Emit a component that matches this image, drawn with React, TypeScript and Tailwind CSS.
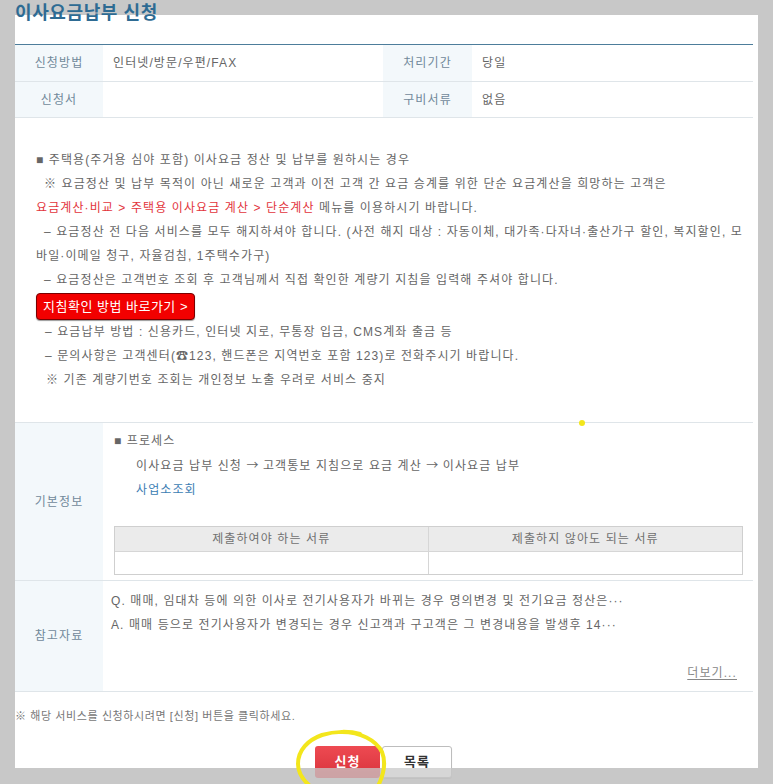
import React from 'react';

const labelCls =
  'flex shrink-0 items-center justify-center bg-[#f3f8fb] text-[#71899a]';

function InfoRow({
  a,
  b,
  c,
  d,
  h,
}: {
  a: string;
  b: string;
  c: string;
  d: string;
  h: string;
}) {
  return (
    <div className={`flex border-b border-[#dfe5e9] ${h}`}>
      <div className={`${labelCls} w-[88px]`}>{a}</div>
      <div className="flex w-[280px] items-center pl-[10px]">{b}</div>
      <div className={`${labelCls} w-[89px]`}>{c}</div>
      <div className="flex flex-1 items-center pl-[10px]">{d}</div>
    </div>
  );
}

const Arrow = () => <span className="font-['Noto_Sans_CJK_KR',sans-serif] tracking-normal">→</span>;

export default function App() {
  return (
    <div className="relative h-[784px] w-[773px] overflow-hidden bg-[#c8c8c8] font-['Liberation_Sans','Noto_Sans_CJK_KR',sans-serif] text-[12px] tracking-[1.1px] text-[#666]">
      <div className="ml-[15px] mt-[15px] flow-root h-[753px] w-[743px] bg-white">
        {/* Title */}
        <h1 className="-mt-[14px] h-[43px] text-[18px] font-bold leading-[24px] tracking-[0.6px] text-[#2e6b93]">
          이사요금납부 신청
        </h1>

        {/* Summary table */}
        <div className="w-[738px] border-t border-[#4d7d9b]">
          <InfoRow a="신청방법" b="인터넷/방문/우편/FAX" c="처리기간" d="당일" h="h-[37px]" />
          <InfoRow a="신청서" b="" c="구비서류" d="없음" h="h-[36px]" />
        </div>

        {/* Notice */}
        <div className="w-[738px] border-b border-[#dfe5e9] pb-[30px] pl-[21px] pt-[30px] leading-[24px]">
          <p className="whitespace-nowrap">■ 주택용(주거용 심야 포함) 이사요금 정산 및 납부를 원하시는 경우</p>
          <p className="whitespace-nowrap pl-[8px]">
            ※ 요금정산 및 납부 목적이 아닌 새로운 고객과 이전 고객 간 요금 승계를 위한 단순 요금계산을 희망하는 고객은
          </p>
          <p className="whitespace-nowrap">
            <span className="text-[#e2343c]">요금계산·비교 &gt; 주택용 이사요금 계산 &gt; 단순계산</span> 메뉴를 이용하시기 바랍니다.
          </p>
          <p className="whitespace-nowrap pl-[8px]">
            – 요금정산 전 다음 서비스를 모두 해지하셔야 합니다. (사전 해지 대상 : 자동이체, 대가족·다자녀·출산가구 할인, 복지할인, 모
          </p>
          <p className="whitespace-nowrap">바일·이메일 청구, 자율검침, 1주택수가구)</p>
          <p className="whitespace-nowrap pl-[8px]">
            – 요금정산은 고객번호 조회 후 고객님께서 직접 확인한 계량기 지침을 입력해 주셔야 합니다.
          </p>
          <button className="mt-[1px] flex h-[27px] items-center rounded-[4px] border border-[#7a0000] bg-[#f20000] px-[6px] text-[13px] tracking-[0.5px] text-white shadow-[0_1px_1px_rgba(0,0,0,0.4)]">
            지침확인 방법 바로가기 &gt;
          </button>
          <p className="whitespace-nowrap pl-[9px]">– 요금납부 방법 : 신용카드, 인터넷 지로, 무통장 입금, CMS계좌 출금 등</p>
          <p className="whitespace-nowrap pl-[9px]">
            – 문의사항은 고객센터(☎123, 핸드폰은 지역번호 포함 123)로 전화주시기 바랍니다.
          </p>
          <p className="whitespace-nowrap pl-[10px]">※ 기존 계량기번호 조회는 개인정보 노출 우려로 서비스 중지</p>
        </div>

        {/* 기본정보 */}
        <div className="flex w-[738px] border-b border-[#dfe5e9]">
          <div className={`${labelCls} w-[88px]`}>기본정보</div>
          <div className="flex-1 pb-[5px] pl-[11px] pr-[10px] pt-[6px] leading-[24px]">
            <p>■ 프로세스</p>
            <p className="pl-[22px]">
              이사요금 납부 신청 <Arrow /> 고객통보 지침으로 요금 계산 <Arrow /> 이사요금 납부
            </p>
            <p className="pl-[22px]">
              <a className="text-[#3b7db3]">사업소조회</a>
            </p>
            <div className="mt-[24px] border border-[#cfcfcf]">
              <div className="grid h-[25px] grid-cols-2 border-b border-[#d6d6d6] bg-[#ebebeb] text-[#707070]">
                <div className="flex items-center justify-center border-r border-[#d6d6d6]">제출하여야 하는 서류</div>
                <div className="flex items-center justify-center">제출하지 않아도 되는 서류</div>
              </div>
              <div className="grid h-[22px] grid-cols-2">
                <div className="border-r border-[#d6d6d6]" />
                <div />
              </div>
            </div>
          </div>
        </div>

        {/* 참고자료 */}
        <div className="flex w-[738px] border-b border-[#dfe5e9]">
          <div className={`${labelCls} w-[88px]`}>참고자료</div>
          <div className="flex-1 pb-[6px] pl-[8px] pr-[16px] pt-[8px] leading-[24px]">
            <p className="whitespace-nowrap">Q. 매매, 임대차 등에 의한 이사로 전기사용자가 바뀌는 경우 명의변경 및 전기요금 정산은···</p>
            <p className="whitespace-nowrap">A. 매매 등으로 전기사용자가 변경되는 경우 신고객과 구고객은 그 변경내용을 발생후 14···</p>
            <p className="h-[24px]" />
            <p className="text-right">
              <a className="text-[#888] underline underline-offset-2">더보기...</a>
            </p>
          </div>
        </div>

        <p className="mt-[16px] text-[11px] leading-[16px] tracking-[0.6px] text-[#777]">
          ※ 해당 서비스를 신청하시려면 [신청] 버튼을 클릭하세요.
        </p>

        <div className="mt-[22px] flex justify-center gap-[2px] pr-[6px]">
          <button className="h-[32px] w-[65px] rounded-[3px] bg-gradient-to-b from-[#ee4a52] to-[#d8323b] text-[13px] font-bold text-white">
            신청
          </button>
          <button className="h-[32px] w-[70px] rounded-[3px] border border-[#bdbdbd] bg-white text-[13px] font-bold text-[#333] shadow-[0_1px_1px_rgba(0,0,0,0.15)]">
            목록
          </button>
        </div>
      </div>

      {/* dimmed strip over bottom edge */}
      <div className="absolute left-0 right-0 top-[768px] h-[16px] bg-[#c8c8c8]/75" />

      {/* yellow markup */}
      <span className="absolute left-[579px] top-[420px] h-[6px] w-[6px] rounded-full bg-[#f3e61c]" />
      <svg className="absolute left-[280px] top-[720px]" width="130" height="64" viewBox="0 0 130 64">
        <path
          d="M80 14 C70 11 55 11 42 15 C28 20 18 30 18 44 C18 54 24 61 30 66 M62 12 C80 12 96 20 102 32 C106 42 104 54 98 66"
          fill="none"
          stroke="#f3e61c"
          strokeWidth="4"
          strokeLinecap="round"
        />
      </svg>
    </div>
  );
}
